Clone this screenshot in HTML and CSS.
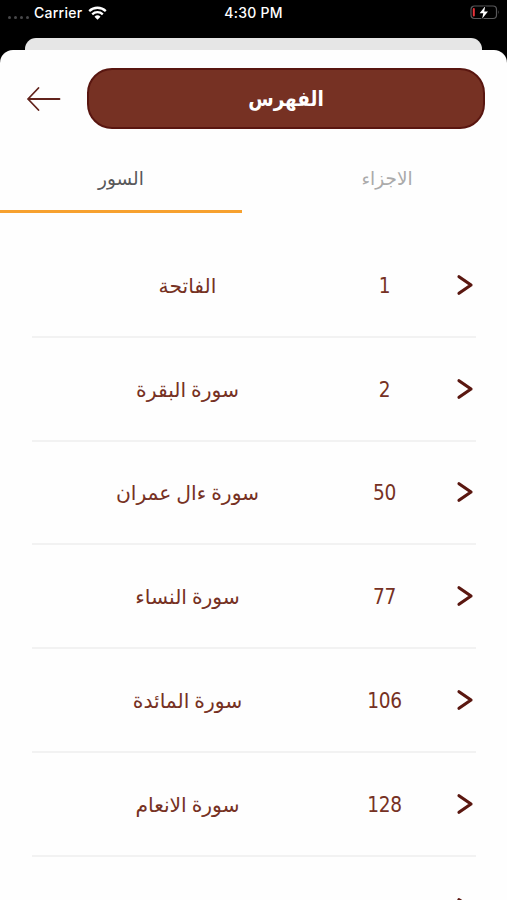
FILE: index.html
```html
<!DOCTYPE html>
<html lang="ar">
<head>
  <meta charset="UTF-8">
  <meta name="viewport" content="width=device-width, initial-scale=1.0">
  <title>الفهرس</title>
  <link rel="stylesheet" href="styles.css">
</head>
<body>
  <div class="status-bar">
    <div class="status-left">
      <div class="dots"><i></i><i></i><i></i><i></i></div>
      <span class="carrier">Carrier</span>
      <svg class="wifi" width="19" height="14" viewBox="0 0 19 14">
        <path d="M1.2 5.1a12 12 0 0 1 16.6 0M4.2 8.3a7.7 7.7 0 0 1 10.6 0" fill="none" stroke="#fff" stroke-width="2.3"/>
        <path d="M9.5 13.8L6.5 10.7a4.3 4.3 0 0 1 6 0z" fill="#fff"/>
      </svg>
    </div>
    <div class="status-time">4:30 PM</div>
    <svg class="battery" width="31" height="15" viewBox="0 0 31 15">
      <rect x="1" y="1" width="25.5" height="12.5" rx="3.5" fill="none" stroke="#58585a" stroke-width="1.2"/>
      <path d="M28.3 5.2q1.6 2 0 4z" fill="#58585a"/>
      <rect x="2.8" y="3" width="2" height="8.5" rx="1" fill="#e8333a"/>
      <path d="M15.2 1.3L9.6 8.2h3.7l-1.2 5.5 5.9-7.3h-3.8z" fill="#fff" stroke="#000" stroke-width="2" paint-order="stroke"/>
    </svg>
  </div>
  <div class="back-sheet"></div>
  <div class="sheet">
    <div class="header">
      <svg class="back-arrow" width="35" height="26" viewBox="0 0 35 26">
        <path d="M33.5 13H2M12.5 2L2 13l10.5 11" fill="none" stroke="#62231c" stroke-width="1.8" stroke-linecap="round" stroke-linejoin="round"/>
      </svg>
      <h1 class="title">الفهرس</h1>
    </div>
    <div class="tabs">
      <div class="tab active"><span>السور</span></div>
      <div class="tab"><span>الاجزاء</span></div>
    </div>
    <div class="list" id="list"></div>
  </div>

  <script>
    const suras = [
      { name: "الفاتحة", page: 1 },
      { name: "سورة البقرة", page: 2 },
      { name: "سورة ءال عمران", page: 50 },
      { name: "سورة النساء", page: 77 },
      { name: "سورة المائدة", page: 106 },
      { name: "سورة الانعام", page: 128 },
      { name: "", page: "" }
    ];

    const list = document.getElementById('list');
    suras.forEach(sura => {
      const row = document.createElement('div');
      row.classList.add('row');
      row.innerHTML = `
        <span class="name" dir="rtl">${sura.name}</span>
        <span class="page">${sura.page}</span>
        <svg class="chevron" width="18" height="22" viewBox="0 0 18 22">
          <path d="M3 2.7L15 11 3 19.3" fill="none" stroke="#5a1710" stroke-width="3.2" stroke-linecap="round" stroke-linejoin="round"/>
        </svg>
      `;
      list.appendChild(row);
    });
  </script>
</body>
</html>
```
FILE: styles.css
```css
body {
  margin: 0;
  height: 900px;
  overflow: hidden;
  background-color: #000;
  font-family: "DejaVu Sans", sans-serif;
  display: flex;
  flex-direction: column;
}
.status-bar {
  flex: none;
  height: 38px;
  box-sizing: border-box;
  padding: 5px 6px 0 8px;
  display: grid;
  grid-template-columns: 1fr auto 1fr;
  align-items: start;
  color: #fff;
  font-family: Inter, "Liberation Sans", sans-serif;
  font-size: 14px;
  font-weight: 500;
  letter-spacing: 0.25px;
  line-height: 16px;
}
.status-left {
  display: flex;
}
.dots {
  display: flex;
  gap: 3px;
  padding-top: 11px;
  margin-right: 5px;
}
.dots i {
  width: 3px;
  height: 3px;
  border-radius: 50%;
  background-color: #48484a;
}
.wifi {
  margin: 1px 0 0 6px;
}
.status-time {
  padding-right: 2px;
}
.battery {
  justify-self: end;
}
.back-sheet {
  flex: none;
  height: 12px;
  margin: 0 25px;
  background-color: #e6e6e6;
  border-radius: 11px 11px 0 0;
}
.sheet {
  flex: 1;
  min-height: 0;
  overflow: hidden;
  background-color: #fefefe;
  border-radius: 13px 13px 0 0;
}
.header {
  display: flex;
  align-items: center;
  padding: 18px 22px 0 26px;
}
.title {
  flex: 1;
  height: 61px;
  box-sizing: border-box;
  margin: 0 0 0 26px;
  border: 2px solid #591610;
  border-radius: 25px;
  background-color: #763123;
  color: #fff;
  font-family: "DejaVu Sans Condensed", "DejaVu Sans", sans-serif;
  font-size: 20.5px;
  line-height: 59px;
  text-align: center;
}
.tabs {
  display: flex;
  margin-top: 19px;
}
.tab {
  width: 242px;
  height: 65px;
  box-sizing: border-box;
  border-bottom: 3px solid transparent;
  color: #aaa;
  font-size: 18.5px;
  line-height: 62px;
  text-align: center;
}
.tab:last-child {
  width: 265px;
  padding-left: 25px;
}
.tab.active {
  border-bottom-color: #f7a12f;
  color: #58585a;
}
.list {
  margin: 21px 31px 0 32px;
}
.row {
  height: 103.8px;
  box-sizing: border-box;
  border-bottom: 2px solid #f2f2f2;
  display: grid;
  grid-template-columns: 311px 83px 50px;
  align-items: center;
  color: #763123;
  font-size: 20.3px;
  text-align: center;
}
.name,
.page {
  padding-top: 2px;
}
.name {
  word-spacing: -1.5px;
}
.page {
  font-family: "DejaVu Sans Condensed", "DejaVu Sans", sans-serif;
  font-size: 20.6px;
  letter-spacing: -0.3px;
}
.chevron {
  justify-self: end;
  margin-right: 2px;
}
```
